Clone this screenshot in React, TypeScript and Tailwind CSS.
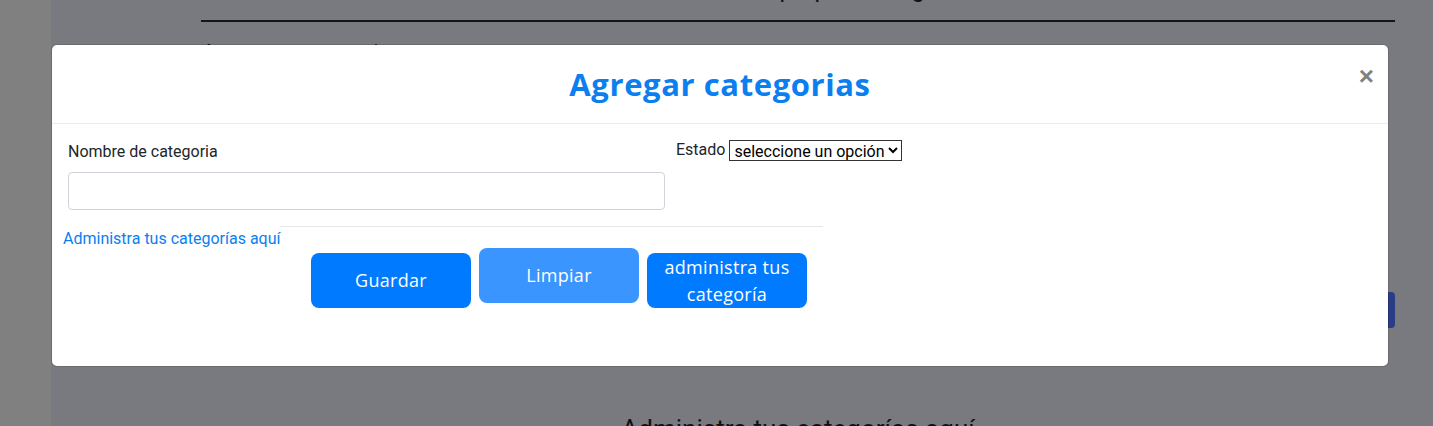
import { useState } from "react";

export default function App() {
  const [nombre, setNombre] = useState("");
  const [estado, setEstado] = useState("");

  return (
    <div className="relative h-[426px] w-full overflow-hidden bg-[#797a7f] font-['Roboto',sans-serif]">
      {/* dimmed page behind the modal */}
      <div className="flex h-full">
        <div className="w-[51px] shrink-0 bg-[#808080]" />
        <div className="flex-1 pl-[150px] pr-[38px]">
          <p className="-mt-[25px] text-center text-[24px] leading-[29px] text-[#111114]">
            Administra tus propias categorías
          </p>
          <div className="mt-[16px] h-[2px] bg-[#141418]" />
          <p className="mt-[17px] text-[24px] leading-[29px] text-[#111114]">Agregar categorias</p>
          <div className="mt-[224px] flex justify-end">
            <div className="h-[36px] w-[90px] rounded-[4px] bg-[#2b3c86]" />
          </div>
          <p className="mt-[86px] text-center text-[26px] leading-[31px] text-[#111114]">
            Administra tus categorías aquí
          </p>
        </div>
      </div>

      {/* modal */}
      <div className="absolute left-[52px] top-[45px] h-[321px] w-[1336px] rounded-[5px] bg-white shadow-[0_0_0_1px_rgba(0,0,0,0.12)]">
        <div className="relative flex h-[79px] items-center justify-center border-b border-[#e9ecef]">
          <h2 className="font-['Open_Sans',sans-serif] text-[31px] font-bold tracking-[0.6px] text-[#0b7ef0]">
            Agregar categorias
          </h2>
          <button className="absolute right-[14px] top-[18px] font-['Liberation_Sans',sans-serif] text-[26px] font-bold leading-[26px] text-[#808080]">
            ×
          </button>
        </div>

        <div className="px-[16px] pt-[16px]">
          <div className="flex items-start gap-[11px]">
            <div className="w-[597px]">
              <label className="block text-[16px] leading-[24px] text-[#212529]">Nombre de categoria</label>
              <input
                value={nombre}
                onChange={(e) => setNombre(e.target.value)}
                className="mt-[8px] block h-[38px] w-full rounded-[4px] border border-[#ced4da] px-3 text-[16px] outline-none"
              />
            </div>
            <div className="-mt-[1px] flex items-center gap-[4px]">
              <span className="text-[16px] leading-[22px] text-[#212529]">Estado</span>
              <select
                value={estado}
                onChange={(e) => setEstado(e.target.value)}
                className="h-[21px] w-[173px] border border-[#333] bg-white text-[16px] leading-[19px] text-black"
              >
                <option value="">seleccione un opción</option>
                <option value="activo">activo</option>
                <option value="inactivo">inactivo</option>
              </select>
            </div>
          </div>

          <div className="-ml-[5px] mt-[16px] w-[760px]">
            <div className="flex">
              <div className="w-[217px]" />
              <div className="h-px flex-1 bg-[#e4e6e9]" />
            </div>
            <a href="#" className="block pt-[2px] text-[16px] leading-[20px] text-[#0b7ef0]">
              Administra tus categorías aquí
            </a>
            <div className="-mt-[1px] ml-[248px] flex items-start gap-[8px] font-['Open_Sans',sans-serif] text-[18px] text-white">
              <button className="mt-[5px] flex h-[55px] w-[160px] items-center justify-center rounded-[8px] bg-[#007bff] tracking-[0.3px]">
                Guardar
              </button>
              <button className="flex h-[55px] w-[160px] items-center justify-center rounded-[8px] bg-[#3a95ff] tracking-[0.3px]">
                Limpiar
              </button>
              <button className="mt-[5px] flex h-[55px] w-[160px] items-center justify-center rounded-[8px] bg-[#007bff] leading-[27px] tracking-[0.3px]">
                administra tus
                <br />
                categoría
              </button>
            </div>
          </div>
        </div>
      </div>
    </div>
  );
}
